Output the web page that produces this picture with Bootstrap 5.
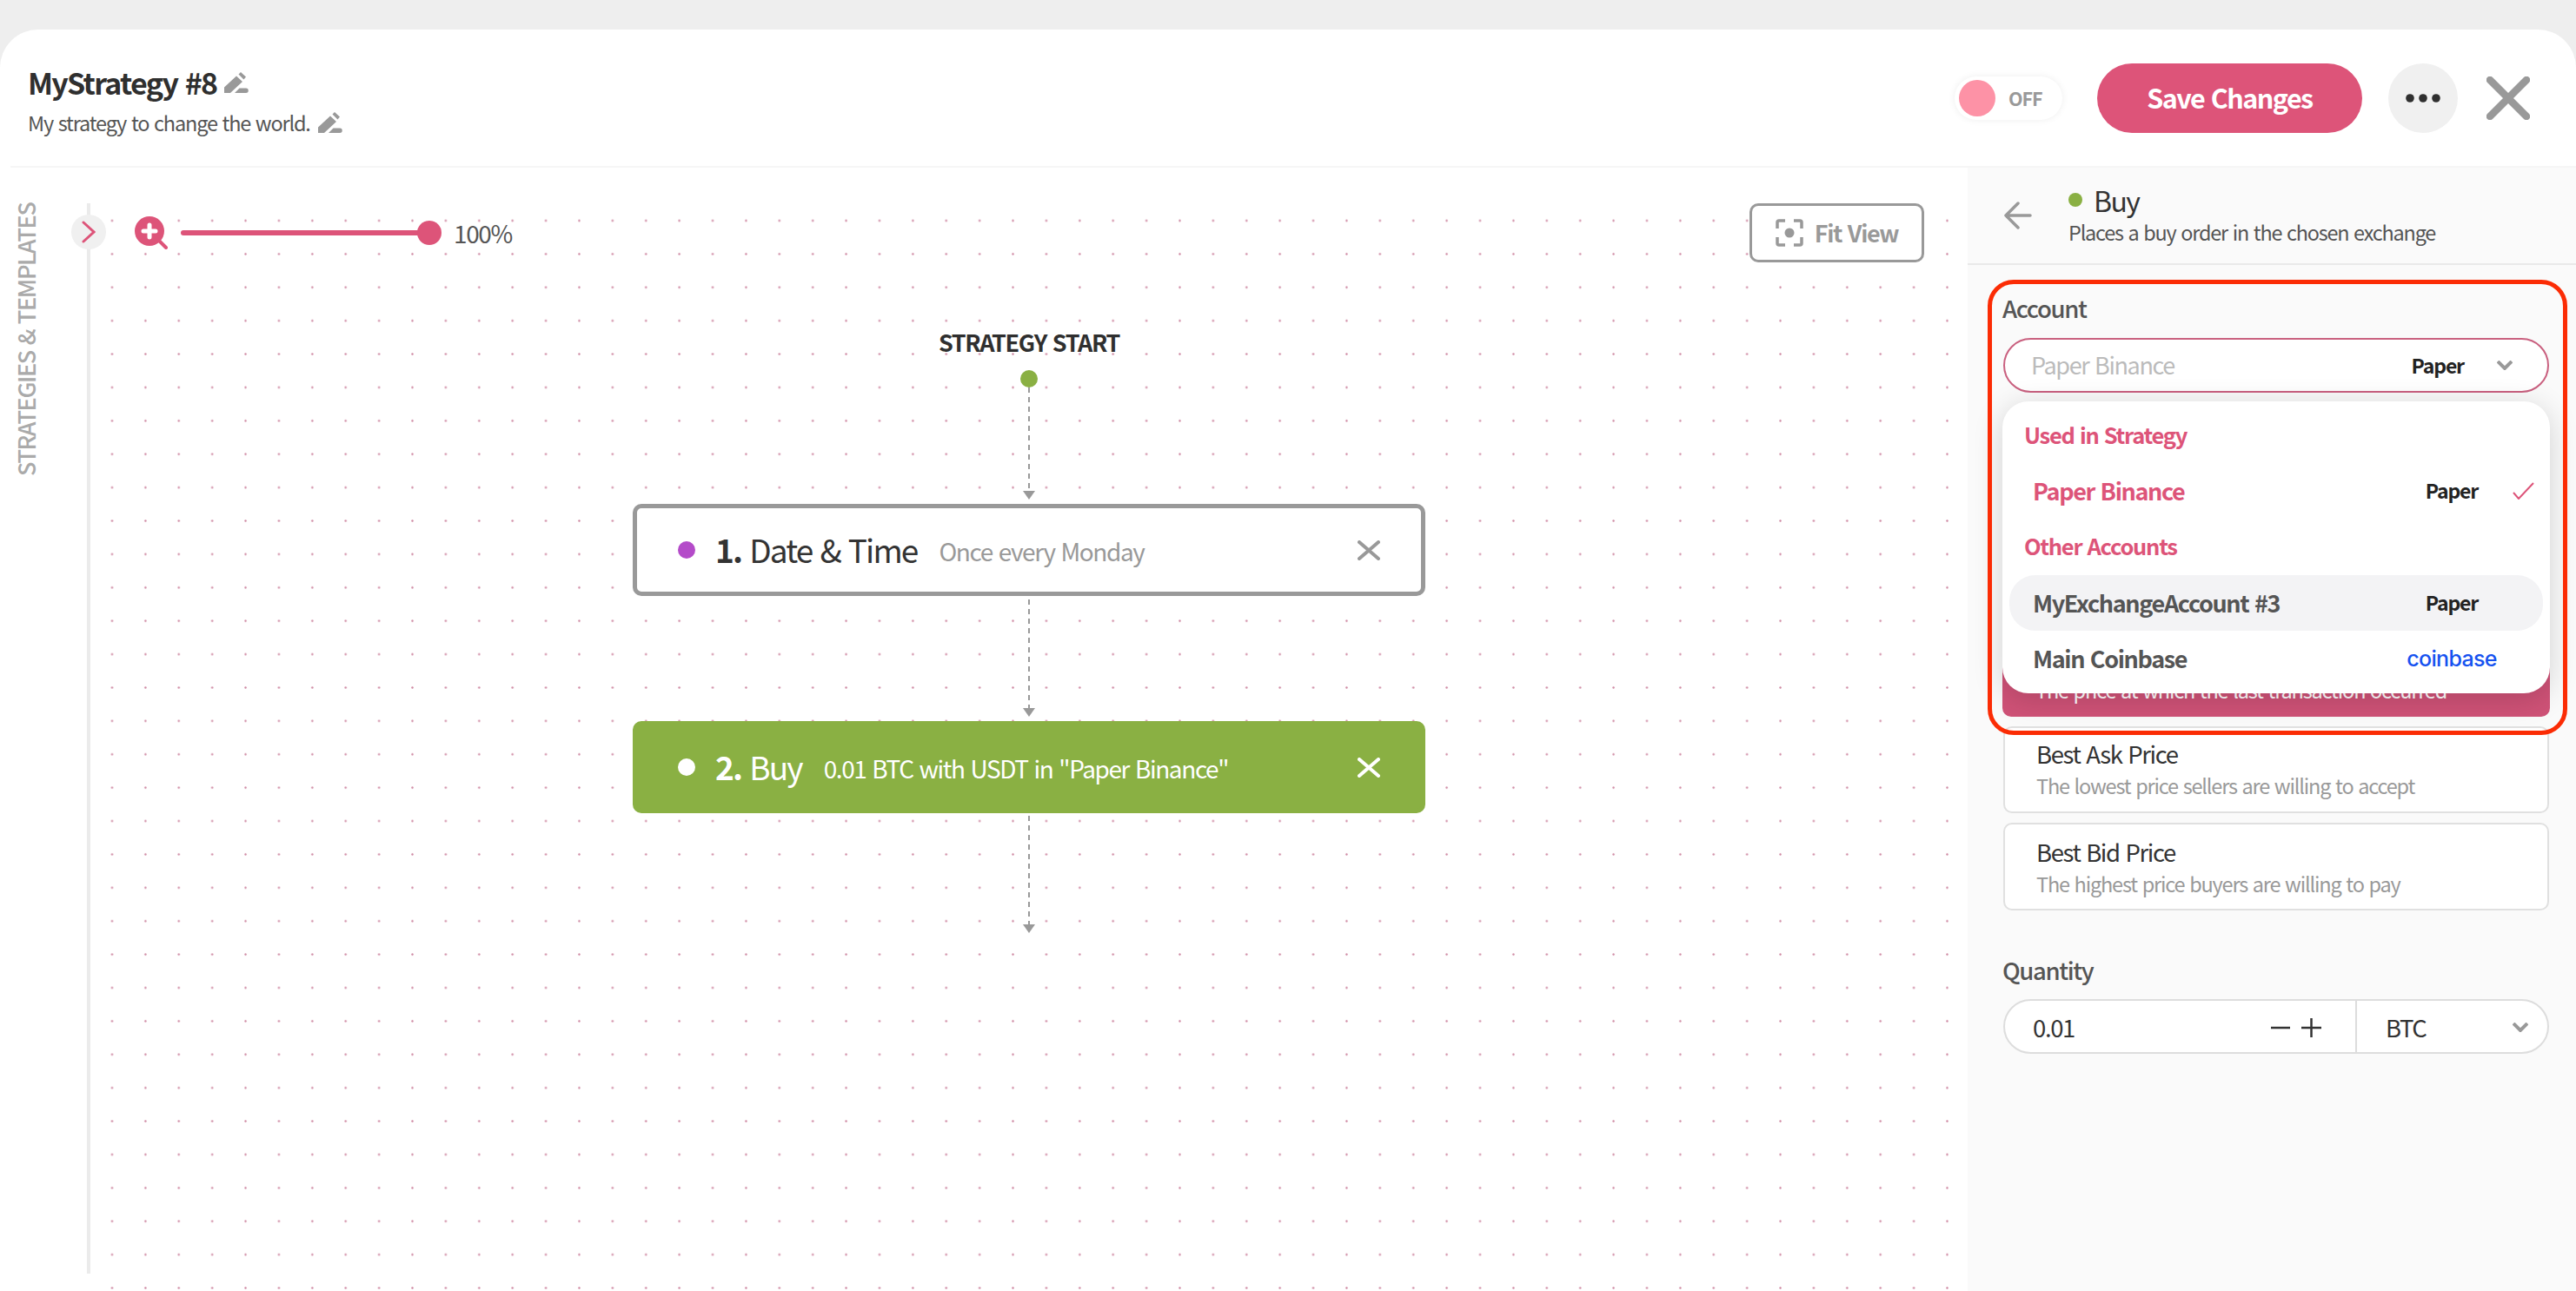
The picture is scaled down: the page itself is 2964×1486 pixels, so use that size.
<!DOCTYPE html>
<html lang="en">
<head>
<meta charset="utf-8">
<title>MyStrategy #8</title>
<link href="https://cdn.jsdelivr.net/npm/bootstrap@5.3.0/dist/css/bootstrap.min.css" rel="stylesheet">
<style>
html,body{height:100%;}
body{margin:0;background:#eee;font-family:"Noto Sans CJK SC","Lato",sans-serif;color:#333;line-height:1.2;overflow:hidden;}
body *{letter-spacing:-.05em;word-spacing:.07em;}
.shell{margin-top:34px;height:1452px;background:#fff;border-radius:44px 44px 0 0;overflow:hidden;}
.top-bar{height:159px;padding:0 53px 0 20px;border-bottom:2px solid #f6f6f6;margin-left:12px;}
.s-title{font-size:34px;font-weight:700;color:#2f2f2f;line-height:42px;margin-top:5px;}
.s-sub{font-size:23.5px;color:#555;line-height:30px;margin-top:10px;}
.pencil{width:28px;height:24px;margin-left:9px;fill:#999;flex:none;}
.off-toggle{width:124px;height:50px;border-radius:25px;background:#fff;box-shadow:0 0 8px rgba(0,0,0,.07);padding-left:5px;gap:15px;font-size:21.5px;font-weight:700;color:#999;}
.off-knob{width:42px;height:42px;border-radius:50%;background:#fd92a6;}
.save-btn{width:305px;height:80px;margin-left:40px;background:#dd5479;border:0;color:#fff;font-size:30.5px;font-weight:700;padding:0;}
.save-btn:hover{background:#dd5479;color:#fff;}
.more-btn{width:80px;height:80px;margin-left:30px;background:#f0f0f0;border:0;border-radius:50%;padding:0;}
.close-x{width:50px;height:50px;margin-left:33px;}
.work-left{width:2264px;padding-top:41px;}
.side-col{width:104px;border-right:4px solid #ebebeb;position:relative;height:1232px;}
.side-label{writing-mode:vertical-rl;transform:rotate(180deg);font-size:27px;font-weight:500;color:#aaa;margin-left:15px;line-height:30px;height:317px;white-space:nowrap;text-align:right;}
.side-toggle{position:absolute;left:82px;top:13px;width:40px;height:40px;border-radius:50%;background:#f0f0f0;}
.flow-canvas{flex:1;height:1252px;background-image:radial-gradient(circle at center,#cf8aa3 .8px,rgba(207,138,163,0) 1.6px);background-size:38.4px 38.4px;background-position:5.8px .8px;}
.tool-row{height:68px;padding:0 50px 0 51px;}
.zoom-track{width:276px;height:6px;border-radius:3px;background:#dd5479;margin-left:15px;position:relative;}
.zoom-thumb{position:absolute;right:-24px;top:-11px;width:28px;height:28px;border-radius:50%;background:#dd5479;}
.zoom-val{font-size:28px;color:#555;margin-left:38px;line-height:34px;}
.fit-btn{width:201px;height:68px;border:3px solid #999;border-radius:10px;background:#fff;color:#999;font-size:27px;font-weight:700;gap:13px;padding:0;}
.fit-btn:hover{background:#fff;color:#999;border-color:#999;}
.start-label{font-size:27px;font-weight:700;color:#2f2f2f;margin-top:75px;line-height:34px;}
.start-dot{width:20px;height:20px;border-radius:50%;background:#8ab043;margin-top:15px;}
.conn{display:block;width:14px;flex:none;}
.flow-node{width:912px;height:106px;border-radius:10px;padding:0 47px;background:#fff;border:5px solid #999;}
.flow-node.is-buy{background:#8ab043;border-color:#8ab043;color:#fff;}
.n-dot{width:20px;height:20px;border-radius:50%;background:#b44bc9;flex:none;margin-right:23px;}
.is-buy .n-dot{background:#fff;}
.n-name{font-size:37px;line-height:44px;margin-top:-2px;}
.n-name b{font-weight:700;}
.n-desc{font-size:28px;color:#999;margin-left:25px;line-height:34px;margin-top:1px;}
.is-buy .n-desc{color:#fff;}
.n-x{width:26px;height:23px;}
.panel-col{width:700px;margin-top:0;background:#fafafa;position:relative;height:1293px;}
.panel-head{height:112px;border-bottom:2px solid #e9e9e9;padding:0 0 0 42px;}
.head-text{margin-left:42px;margin-top:-4px;}
.dot-buy{width:16px;height:16px;border-radius:50%;background:#8ab043;margin-right:13px;}
.ph-title{font-size:32px;line-height:40px;color:#333;}
.ph-sub{font-size:23.4px;color:#555;line-height:30px;margin-top:2px;}
.panel-body{padding:31px 31px 0 41px;position:relative;}
.fld-label{font-size:27.5px;font-weight:500;color:#555;line-height:36px;margin-left:-1px;}
.acct-select{height:63px;border:2px solid #c9607f;border-radius:32px;background:#fff;margin-top:17px;padding:0 40px 0 30px;font-size:27px;color:#bbb;}
.sel-chev{margin-left:38px;}
.tag-paper{font-size:23px;font-weight:700;color:#222;}
.acct-menu{display:block;position:absolute;left:40px;top:157px;width:630px;height:336px;border:0;border-radius:30px;background:#fff;box-shadow:0 6px 34px rgba(0,0,0,.16);padding:0;z-index:3;margin:0;}
.menu-cap{font-size:25.5px;font-weight:600;color:#dd5479;line-height:32px;padding-left:25px;}
.cap-first{padding-top:22px;}
.cap-next{margin-top:15px;}
.menu-row{width:auto;height:64px;margin:0 8px;border-radius:30px;padding:0 10px 0 27px;font-size:27px;font-weight:700;color:#555;}
.row-a{margin-top:17px;}
.row-b{margin-top:18px;}
.menu-row:hover{color:#555;background:transparent;}
.menu-row.is-hover,.menu-row.is-hover:hover{background:#f3f3f5;}
.menu-row.is-on,.menu-row.is-on:hover{color:#dd5479;}
.row-tag{width:120px;text-align:center;margin-left:auto;margin-right:10px;}
.row-tag.no-check{margin-right:35px;}
.cb-word{font-family:"Inter","Liberation Sans",sans-serif;font-size:25px;font-weight:500;color:#1652f0;letter-spacing:-.7px;}
.price-opt{height:100px;border:2px solid #e0e0e0;border-radius:10px;background:#fff;padding:11px 36px;margin-top:11px;}
.price-opt.is-last{height:101px;padding-top:13px;}
.price-opt.is-picked{background:#cf5277;border-color:#cf5277;color:#fff;margin-top:273px;width:630px;margin-left:-1px;padding-top:52px;}
.price-opt.is-picked .po-sub{color:#fff;margin-top:0;}
.po-name{font-size:27.5px;line-height:36px;color:#333;}
.po-sub{font-size:23.5px;line-height:30px;color:#999;margin-top:4px;}
.qty-box{height:63px;border:2px solid #ddd;border-radius:32px;background:#fff;margin-top:16px;font-size:27.5px;color:#333;overflow:hidden;}
.qty-left{width:405px;padding:2px 38px 0 32px;height:100%;border-right:2px solid #ddd;}
.qty-right{flex:1;padding:2px 22px 0 33px;height:100%;}
.qty-cap{margin-top:50px;}
.redmark{position:absolute;left:23px;top:129px;width:667px;height:524px;border:5px solid #fb2c05;border-radius:30px;z-index:4;pointer-events:none;}
</style>
</head>
<body>
<div class="shell d-flex flex-column">
  <header class="top-bar d-flex align-items-center justify-content-between">
    <div>
      <div class="d-flex align-items-center s-title">MyStrategy #8<svg class="pencil" viewBox="0 0 28 24"><path d="M0 24V17.500L14 4.500 21 11 7 24ZM16.500 2.500 19 0 25 5.500 22.500 8.500ZM12 24 17.500 18.500H25A2.750 2.750 0 0 1 25 24Z"/></svg></div>
      <div class="d-flex align-items-center s-sub">My strategy to change the world.<svg class="pencil" viewBox="0 0 28 24"><path d="M0 24V17.500L14 4.500 21 11 7 24ZM16.500 2.500 19 0 25 5.500 22.500 8.500ZM12 24 17.500 18.500H25A2.750 2.750 0 0 1 25 24Z"/></svg></div>
    </div>
    <div class="d-flex align-items-center">
      <div class="off-toggle d-flex align-items-center"><span class="off-knob"></span><span>OFF</span></div>
      <button class="btn rounded-pill save-btn" type="button">Save Changes</button>
      <button class="more-btn d-flex align-items-center justify-content-center" type="button" aria-label="More"><svg width="40" height="12" viewBox="0 0 40 12" fill="#2f2f2f"><circle cx="5" cy="6" r="4.800"/><circle cx="20" cy="6" r="4.800"/><circle cx="35" cy="6" r="4.800"/></svg></button>
      <svg class="close-x" viewBox="0 0 50 50" stroke="#999" stroke-width="8.500" stroke-linecap="round"><path d="M4 4 46 46M46 4 4 46"/></svg>
    </div>
  </header>
  <div class="d-flex flex-grow-1">
    <div class="work-left d-flex">
      <aside class="side-col">
        <div class="side-label">STRATEGIES &amp; TEMPLATES</div>
        <div class="side-toggle d-flex align-items-center justify-content-center"><svg width="16" height="26" viewBox="0 0 16 26" fill="none" stroke="#dd5479" stroke-width="3" stroke-linecap="round"><path d="M2 2 14 13 2 24"/></svg></div>
      </aside>
      <main class="flow-canvas d-flex flex-column">
        <div class="tool-row d-flex align-items-center justify-content-between">
          <div class="d-flex align-items-center">
            <svg width="38" height="38" viewBox="0 0 38 38"><path d="M27 27 36 36" stroke="#dd5479" stroke-width="4" stroke-linecap="round"/><circle cx="17" cy="17" r="17" fill="#dd5479"/><path d="M17 10V24M10 17H24" stroke="#fff" stroke-width="5" stroke-linecap="round"/></svg>
            <div class="zoom-track"><span class="zoom-thumb"></span></div>
            <span class="zoom-val">100%</span>
          </div>
          <button class="btn fit-btn d-flex align-items-center justify-content-center" type="button"><svg width="32" height="32" viewBox="0 0 32 32" fill="none" stroke="#999" stroke-width="3.500"><path d="M2 11V4Q2 2 4 2H11M21 2H28Q30 2 30 4V11M30 21V28Q30 30 28 30H21M11 30H4Q2 30 2 28V21"/><circle cx="16" cy="16" r="5.500" fill="#999" stroke="none"/></svg><span>Fit View</span></button>
        </div>
        <div class="d-flex flex-column align-items-center">
          <div class="start-label">STRATEGY START</div>
          <div class="start-dot"></div>
          <svg class="conn" height="134" viewBox="0 0 14 134"><path d="M7 0V119" stroke="#999" stroke-width="2" stroke-dasharray="6 5" fill="none"/><path d="M0 119H14L7 129Z" fill="#999"/></svg>
          <div class="flow-node d-flex align-items-center">
            <span class="n-dot"></span><span class="n-name"><b>1.</b> Date &amp; Time</span><span class="n-desc">Once every Monday</span>
            <svg class="n-x ms-auto" viewBox="0 0 26 23" stroke="#999" stroke-width="4" stroke-linecap="round"><path d="M2 2 24 21M24 2 2 21"/></svg>
          </div>
          <svg class="conn" height="144" viewBox="0 0 14 144"><path d="M7 4V129" stroke="#999" stroke-width="2" stroke-dasharray="6 5" fill="none"/><path d="M0 129H14L7 139Z" fill="#999"/></svg>
          <div class="flow-node is-buy d-flex align-items-center">
            <span class="n-dot"></span><span class="n-name"><b>2.</b> Buy</span><span class="n-desc">0.01 BTC with USDT in "Paper Binance"</span>
            <svg class="n-x ms-auto" viewBox="0 0 26 23" stroke="#fff" stroke-width="4" stroke-linecap="round"><path d="M2 2 24 21M24 2 2 21"/></svg>
          </div>
          <svg class="conn" height="138" viewBox="0 0 14 138"><path d="M7 3V128" stroke="#999" stroke-width="2" stroke-dasharray="6 5" fill="none"/><path d="M0 128H14L7 138Z" fill="#999"/></svg>
        </div>
      </main>
    </div>
    <section class="panel-col flex-grow-1">
      <div class="panel-head d-flex align-items-center">
        <svg width="32" height="32" viewBox="0 0 32 32" fill="none" stroke="#999" stroke-width="3.500" stroke-linecap="round" stroke-linejoin="round"><path d="M30 16H2M16 2 2 16 16 30"/></svg>
        <div class="head-text">
          <div class="d-flex align-items-center ph-title"><span class="dot-buy"></span>Buy</div>
          <div class="ph-sub">Places a buy order in the chosen exchange</div>
        </div>
      </div>
      <div class="panel-body">
        <div class="fld-label">Account</div>
        <div class="acct-select d-flex align-items-center"><span>Paper Binance</span><span class="tag-paper ms-auto">Paper</span><svg class="sel-chev" width="18" height="11" viewBox="0 0 18 11" fill="none" stroke="#999" stroke-width="4"><path d="M1 1 9 9 17 1"/></svg></div>
        <div class="dropdown-menu show acct-menu">
          <div class="menu-cap cap-first">Used in Strategy</div>
          <a class="dropdown-item menu-row row-a is-on d-flex align-items-center" href="#">Paper Binance<span class="tag-paper row-tag">Paper</span><svg width="25" height="20" viewBox="0 0 25 20" fill="none" stroke="#dd5479" stroke-width="2"><path d="M1 12 7 19 24 1"/></svg></a>
          <div class="menu-cap cap-next">Other Accounts</div>
          <a class="dropdown-item menu-row row-b is-hover d-flex align-items-center" href="#">MyExchangeAccount #3<span class="tag-paper row-tag no-check">Paper</span></a>
          <a class="dropdown-item menu-row d-flex align-items-center" href="#">Main Coinbase<span class="cb-word row-tag no-check">coinbase</span></a>
        </div>
        <div class="price-opt is-picked"><div class="po-sub">The price at which the last transaction occurred</div></div>
        <div class="price-opt"><div class="po-name">Best Ask Price</div><div class="po-sub">The lowest price sellers are willing to accept</div></div>
        <div class="price-opt is-last"><div class="po-name">Best Bid Price</div><div class="po-sub">The highest price buyers are willing to pay</div></div>
        <div class="fld-label qty-cap">Quantity</div>
        <div class="qty-box d-flex align-items-center">
          <div class="qty-left d-flex align-items-center"><span>0.01</span><svg class="ms-auto" width="60" height="24" viewBox="0 0 60 24" fill="none" stroke="#333" stroke-width="2.500"><path d="M1 12H23M36 12H59M47.500 1V23"/></svg></div>
          <div class="qty-right d-flex align-items-center"><span>BTC</span><svg class="ms-auto" width="18" height="11" viewBox="0 0 18 11" fill="none" stroke="#999" stroke-width="4"><path d="M1 1 9 9 17 1"/></svg></div>
        </div>
      </div>
      <div class="redmark"></div>
    </section>
  </div>
</div>
<script src="https://cdn.jsdelivr.net/npm/bootstrap@5.3.0/dist/js/bootstrap.bundle.min.js"></script>
</body>
</html>
